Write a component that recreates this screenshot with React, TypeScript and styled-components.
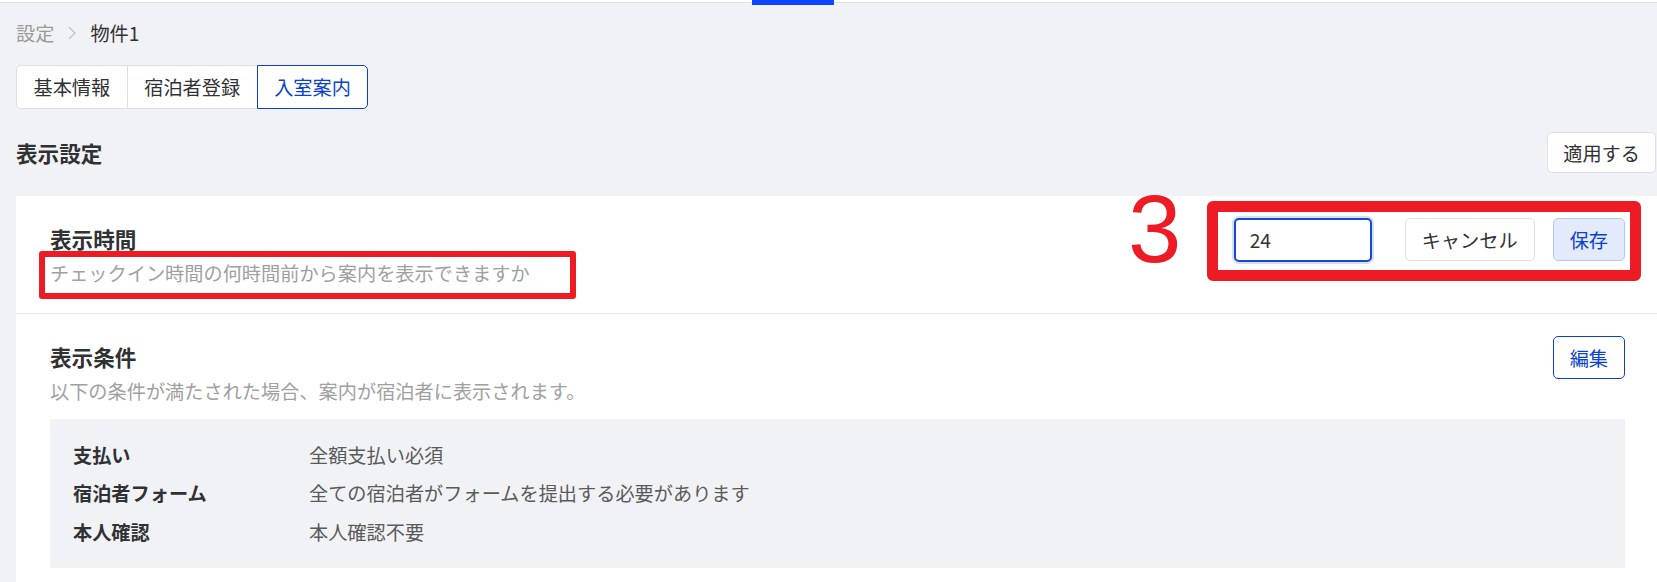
import React from "react";
import styled, { createGlobalStyle } from "styled-components";

const GlobalStyle = createGlobalStyle`
  html, body { margin: 0; padding: 0; background: #f0f2f5; }
  body {
    font-family: "Noto Sans CJK JP", "Noto Sans", sans-serif;
    color: #333;
    overflow: hidden;
  }
  * { box-sizing: border-box; }
`;

const TopBar = styled.div`
  height: 3px;
  background: #fff;
  border-bottom: 1px solid #e2e3e7;
  display: flex;
`;

const NavIndicator = styled.div`
  margin-left: 752px;
  width: 82px;
  height: 5px;
  flex-shrink: 0;
  background: #0a48ff;
`;

const Page = styled.div`
  padding: 0 0 0 16px;
`;

const Breadcrumb = styled.nav`
  margin-top: 16px;
  height: 28px;
  display: flex;
  align-items: center;
  gap: 13px;
  font-size: 19.2px;
  line-height: 28px;
`;

const Crumb = styled.span<{ $current?: boolean }>`
  color: ${(p) => (p.$current ? "#303133" : "#9a9a9a")};
`;

const Tabs = styled.div`
  margin-top: 18px;
  display: flex;
`;

const Tab = styled.button<{ $active?: boolean }>`
  position: relative;
  z-index: ${(p) => (p.$active ? 1 : 0)};
  height: 44px;
  padding: 0 16.5px;
  margin-left: -1px;
  font-family: inherit;
  font-size: 19.2px;
  background: #fff;
  color: ${(p) => (p.$active ? "#0a3fd0" : "#303133")};
  border: 1px solid ${(p) => (p.$active ? "#0a3fd0" : "#dcdfe6")};
  &:first-child {
    margin-left: 0;
    border-radius: 5px 0 0 5px;
  }
  &:last-child {
    border-radius: 0 5px 5px 0;
  }
`;

const HeadingRow = styled.div`
  margin-top: 23px;
  display: flex;
  align-items: center;
  justify-content: space-between;
  padding-right: 1px;
`;

const PageTitle = styled.h2`
  margin: 0;
  font-size: 21.6px;
  line-height: 32px;
  font-weight: 700;
  color: #303133;
`;

const Button = styled.button<{ $variant?: "default" | "primary" | "outline" }>`
  height: 43px;
  padding: 0 15px;
  font-family: inherit;
  font-size: 19.2px;
  border-radius: 5px;
  white-space: nowrap;
  background: ${(p) => (p.$variant === "primary" ? "#e3eafb" : "#fff")};
  color: ${(p) => (p.$variant === "primary" || p.$variant === "outline" ? "#0a3fd0" : "#303133")};
  border: 1px solid
    ${(p) =>
      p.$variant === "primary" ? "#b3c7f2" : p.$variant === "outline" ? "#0a3fd0" : "#dcdfe6"};
`;

const ApplyButton = styled(Button)`
  height: 41px;
`;

const Card = styled.div`
  margin-top: 23px;
  background: #fff;
`;

const Section = styled.section<{ $divider?: boolean }>`
  position: relative;
  padding: 22px 32px ${(p) => (p.$divider ? "25px" : "24px")} 34px;
  border-bottom: ${(p) => (p.$divider ? "1px solid #e6e7ea" : "none")};
`;

const SectionHeader = styled.div`
  display: flex;
  align-items: flex-start;
  justify-content: space-between;
  min-height: 70px;
`;

const TextBlock = styled.div`
  padding-top: 4.5px;
`;

const SectionTitle = styled.h3`
  margin: 0;
  font-size: 21.6px;
  line-height: 32px;
  font-weight: 700;
  color: #303133;
`;

const SectionDesc = styled.p`
  margin: 4px 0 0;
  font-size: 19.2px;
  line-height: 28.8px;
  color: #a0a0a0;
`;

const Controls = styled.div`
  display: flex;
  align-items: flex-start;
`;

const HoursInput = styled.input`
  width: 138px;
  height: 44px;
  padding: 0 14px;
  font-family: inherit;
  font-size: 19.2px;
  color: #333;
  border: 2px solid #1a48d6;
  border-radius: 5px;
  box-shadow: 0 0 0 2px rgba(26, 72, 214, 0.18);
  outline: none;
  margin-right: 33px;
`;

const CancelButton = styled(Button)`
  padding: 0 16px;
  margin-right: 18px;
`;

const SaveButton = styled(Button)`
  padding: 0 16px;
`;

const ConditionBox = styled.div`
  margin-top: 13px;
  background: #f0f2f5;
  padding: 22px 23px 21px;
  display: grid;
  grid-template-columns: 236px 1fr;
  row-gap: 9.7px;
  font-size: 19.2px;
  line-height: 28.8px;
`;

const CondLabel = styled.div`
  font-weight: 700;
  color: #303133;
`;

const CondValue = styled.div`
  color: #5a5a5a;
`;

const RedFrame = styled.div<{ $w: number }>`
  position: absolute;
  border: ${(p) => p.$w}px solid #ed1c24;
  border-radius: ${(p) => (p.$w > 8 ? 6 : 3)}px;
  pointer-events: none;
`;

const StepNumber = styled.div`
  position: absolute;
  left: 1112px;
  top: -15px;
  font-family: "Liberation Sans", Arial, sans-serif;
  font-size: 96px;
  line-height: 96px;
  color: #ed1c24;
  pointer-events: none;
`;

const Chevron = () => (
  <svg width="10" height="14" viewBox="0 0 10 14" fill="none">
    <polyline points="2,1 8,7 2,13" stroke="#c0c4cc" strokeWidth="1.4" />
  </svg>
);

const conditions = [
  ["支払い", "全額支払い必須"],
  ["宿泊者フォーム", "全ての宿泊者がフォームを提出する必要があります"],
  ["本人確認", "本人確認不要"],
];

export default function App() {
  return (
    <>
      <GlobalStyle />
      <TopBar>
        <NavIndicator />
      </TopBar>
      <Page>
        <Breadcrumb>
          <Crumb>設定</Crumb>
          <Chevron />
          <Crumb $current>物件1</Crumb>
        </Breadcrumb>
        <Tabs>
          <Tab>基本情報</Tab>
          <Tab>宿泊者登録</Tab>
          <Tab $active>入室案内</Tab>
        </Tabs>
        <HeadingRow>
          <PageTitle>表示設定</PageTitle>
          <ApplyButton>適用する</ApplyButton>
        </HeadingRow>
        <Card>
          <Section $divider>
            <SectionHeader>
              <TextBlock>
                <SectionTitle>表示時間</SectionTitle>
                <SectionDesc>チェックイン時間の何時間前から案内を表示できますか</SectionDesc>
              </TextBlock>
              <Controls>
                <HoursInput defaultValue="24" />
                <CancelButton>キャンセル</CancelButton>
                <SaveButton $variant="primary">保存</SaveButton>
              </Controls>
            </SectionHeader>
            <RedFrame $w={6} style={{ left: 23, top: 55, width: 537, height: 48 }} />
            <RedFrame $w={11} style={{ left: 1191, top: 5, width: 434, height: 80 }} />
            <StepNumber>3</StepNumber>
          </Section>
          <Section>
            <SectionHeader>
              <TextBlock>
                <SectionTitle>表示条件</SectionTitle>
                <SectionDesc>以下の条件が満たされた場合、案内が宿泊者に表示されます。</SectionDesc>
              </TextBlock>
              <SaveButton $variant="outline">編集</SaveButton>
            </SectionHeader>
            <ConditionBox>
              {conditions.map(([label, value]) => (
                <React.Fragment key={label}>
                  <CondLabel>{label}</CondLabel>
                  <CondValue>{value}</CondValue>
                </React.Fragment>
              ))}
            </ConditionBox>
          </Section>
        </Card>
      </Page>
    </>
  );
}
